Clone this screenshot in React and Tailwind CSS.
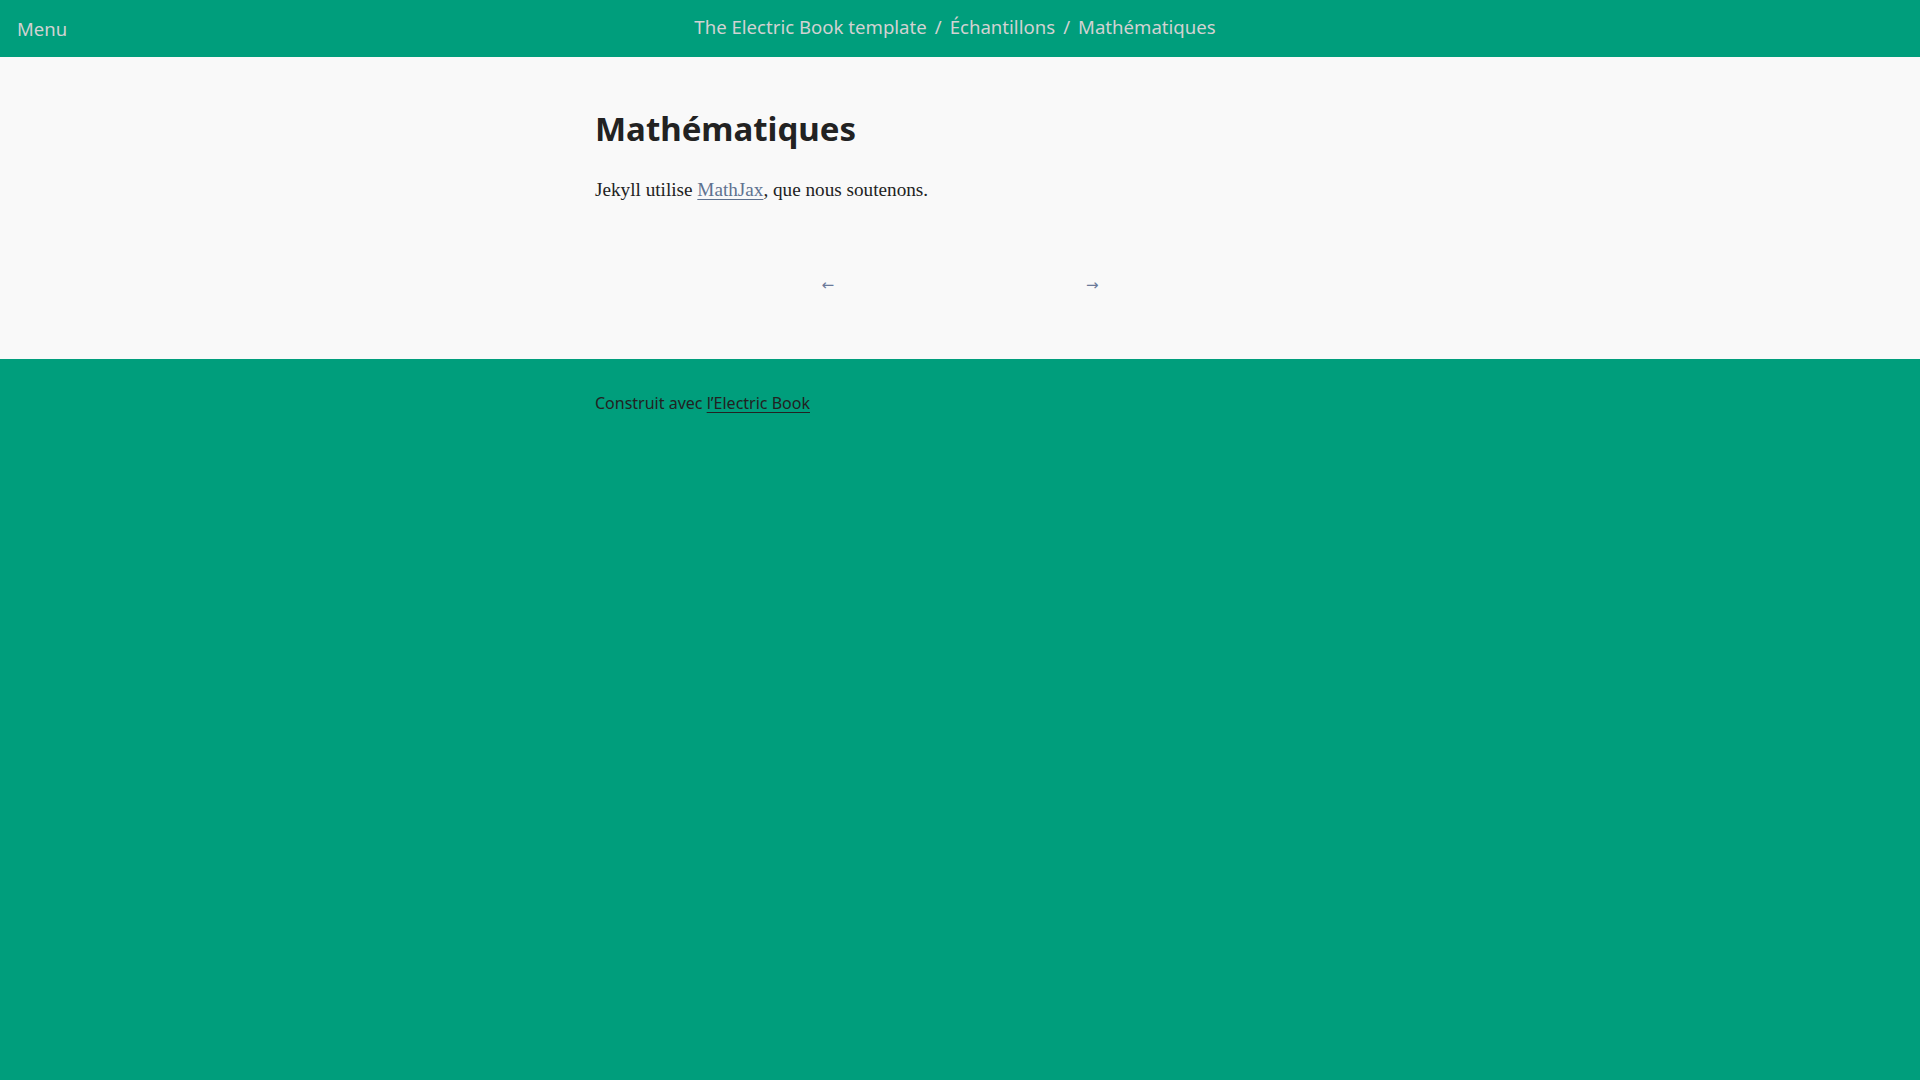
import React from 'react';

function Header() {
  return (
    <header className="grid grid-cols-[1fr_auto_1fr] items-center h-[57px] bg-[#009e7c] text-[#d2d2d2] text-[18.6px] font-['Noto_Sans',sans-serif]">
      <button className="justify-self-start pl-[17px] text-[18.5px]">Menu</button>
      <nav className="flex items-center gap-[8px] pb-[3px] mr-[10px]">
        <a href="#">The Electric Book template</a>
        <span>/</span>
        <a href="#">Échantillons</a>
        <span>/</span>
        <span>Mathématiques</span>
      </nav>
      <div />
    </header>
  );
}

function Content() {
  return (
    <main className="bg-[#f9f9f9] pt-[55px] pb-[62px]">
      <div className="w-[730px] mx-auto">
        <h1 className="text-[33px] font-bold text-[#222] leading-none font-['Noto_Sans',sans-serif]">
          Mathématiques
        </h1>
        <p className="mt-[32px] text-[19.2px] leading-[26px] text-[#222] font-['Liberation_Serif',serif]">
          Jekyll utilise <a href="#" className="text-[#5f7290] underline underline-offset-[3px]">MathJax</a>, que nous soutenons.
        </p>
        <div className="mt-[71px] flex justify-center gap-[252px] text-[#6b7a99] text-[15px] font-['DejaVu_Sans',sans-serif]">
          <a href="#">←</a>
          <a href="#">→</a>
        </div>
      </div>
    </main>
  );
}

function Footer() {
  return (
    <footer className="flex-1 bg-[#009e7c] pt-[32px]">
      <div className="w-[730px] mx-auto text-[16px] text-[#222] font-['Noto_Sans',sans-serif]">
        Construit avec <a href="#" className="underline underline-offset-[3px]">l’Electric Book</a>
      </div>
    </footer>
  );
}

export default function App() {
  return (
    <div className="min-h-screen flex flex-col bg-[#009e7c]">
      <Header />
      <Content />
      <Footer />
    </div>
  );
}
